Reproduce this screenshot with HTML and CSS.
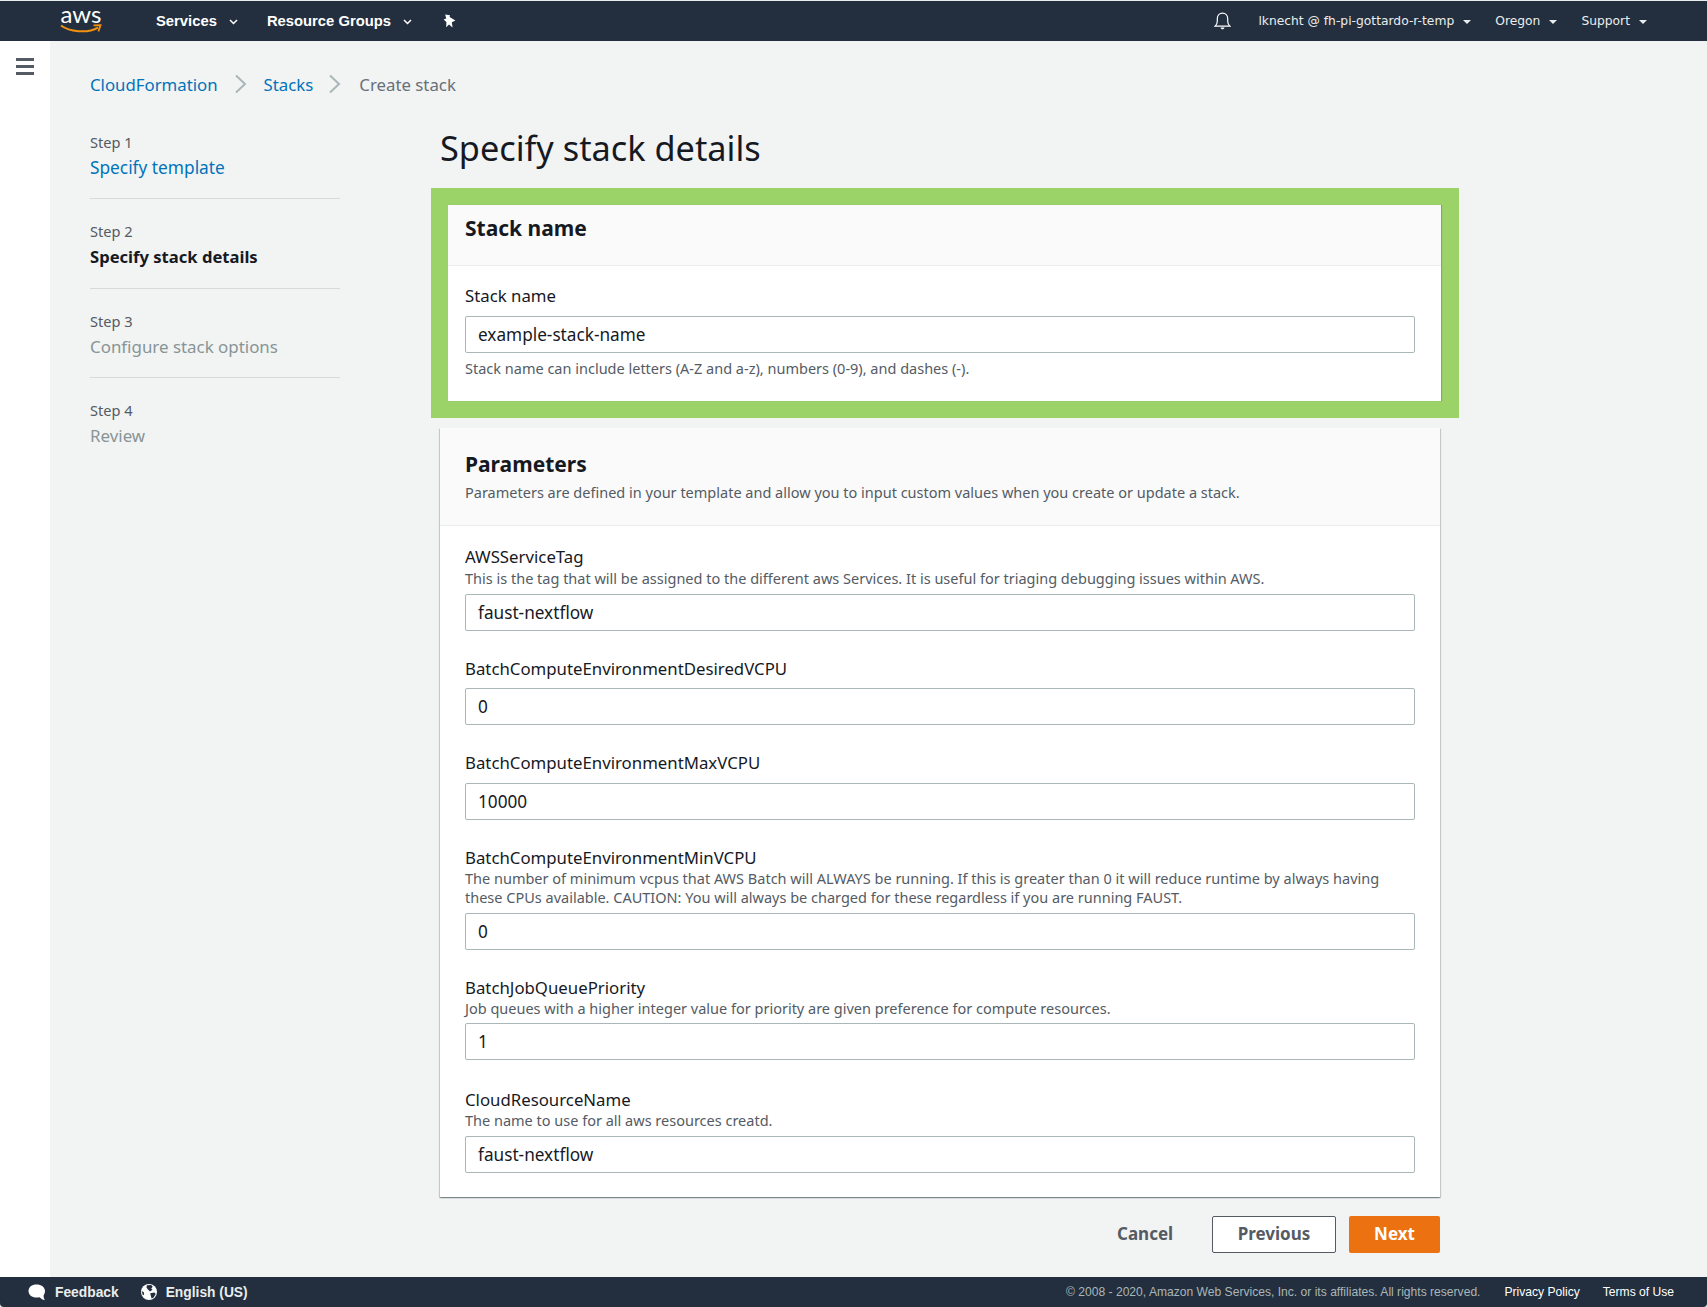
FILE: index.html
```html
<!DOCTYPE html>
<html lang="en">
<head>
<meta charset="utf-8">
<title>Specify stack details</title>
<link rel="stylesheet" href="styles.css">
</head>
<body>
<div class="app">
  <header class="topbar">
    <div class="logo">
      <span class="logo-text">aws</span>
      <svg class="logo-smile" width="42" height="10" viewBox="0 0 42 10"><path d="M1 1.5C9 7.5 27 10 38 3.6" fill="none" stroke="#f29111" stroke-width="2"/><path d="M33.5 1.4L40.5 1.2L38.4 7.4" fill="none" stroke="#f29111" stroke-width="1.8"/></svg>
    </div>
    <nav class="nav-left">
      <span class="nav-item">Services<svg class="caret" width="9" height="6" viewBox="0 0 9 6"><path d="M1 1l3.5 3.5L8 1" fill="none" stroke="#fff" stroke-width="1.5"/></svg></span>
      <span class="nav-item">Resource Groups<svg class="caret" width="9" height="6" viewBox="0 0 9 6"><path d="M1 1l3.5 3.5L8 1" fill="none" stroke="#fff" stroke-width="1.5"/></svg></span>
      <svg class="pin" width="14" height="14" viewBox="0 0 14 14"><path d="M3.2 0.6L8 1.2L7.6 3L13.4 6.6L9.8 8.2L10.6 13.4L7 10.4L4.2 13.2L4.4 8L1.6 5.4L4.2 4.6Z" fill="#fff"/></svg>
    </nav>
    <nav class="nav-right">
      <svg class="bell" width="17" height="18" viewBox="0 0 17 18"><path d="M1 14.2c1.6-1.2 2.3-2.6 2.3-5V6.6C3.300 3.400 5.500 1.200 8.500 1.200s5.200 2.200 5.200 5.400v2.600c0 2.400 .700 3.800 2.300 5z" fill="none" stroke="#fff" stroke-width="1.200"/><path d="M6.500 15.500h4c-.300 1.200-1 1.800-2 1.800s-1.700-.600-2-1.800z" fill="#fff"/></svg>
      <span class="nav-user">lknecht @ fh-pi-gottardo-r-temp<span class="tri"></span></span>
      <span class="nav-user">Oregon<span class="tri"></span></span>
      <span class="nav-user">Support<span class="tri"></span></span>
    </nav>
  </header>
  <div class="body">
    <aside class="sidebar">
      <div class="burger"><span></span><span></span><span></span></div>
    </aside>
    <main class="main">
      <div class="breadcrumb">
        <a class="link">CloudFormation</a>
        <svg class="chev chev-first" width="13" height="20" viewBox="0 0 13 20"><path d="M2 1.500L11 10L2 18.500" fill="none" stroke="#aab7b8" stroke-width="2"/></svg>
        <a class="link">Stacks</a>
        <svg class="chev chev-second" width="13" height="20" viewBox="0 0 13 20"><path d="M2 1.500L11 10L2 18.500" fill="none" stroke="#aab7b8" stroke-width="2"/></svg>
        <span class="crumb-current">Create stack</span>
      </div>
      <div class="content">
        <ol class="steps">
          <li class="step"><small>Step 1</small><a class="link">Specify template</a></li>
          <li class="step"><small>Step 2</small><b>Specify stack details</b></li>
          <li class="step"><small>Step 3</small><span class="off">Configure stack options</span></li>
          <li class="step"><small>Step 4</small><span class="off">Review</span></li>
        </ol>
        <div class="form">
          <h1 class="title">Specify stack details</h1>
          <div class="highlight">
            <section class="panel panel-inner">
              <div class="panel-head head-plain"><h2>Stack name</h2></div>
              <div class="panel-body body-stack">
                <label class="lbl lbl-stack">Stack name</label>
                <input class="inp" value="example-stack-name">
                <p class="hint">Stack name can include letters (A-Z and a-z), numbers (0-9), and dashes (-).</p>
              </div>
            </section>
          </div>
          <section class="panel">
            <div class="panel-head head-params">
              <h2>Parameters</h2>
              <p class="desc">Parameters are defined in your template and allow you to input custom values when you create or update a stack.</p>
            </div>
            <div class="panel-body body-params">
              <div class="field field-first">
                <label class="lbl">AWSServiceTag</label>
                <p class="desc desc-f">This is the tag that will be assigned to the different aws Services. It is useful for triaging debugging issues within AWS.</p>
                <input class="inp" value="faust-nextflow">
              </div>
              <div class="field">
                <label class="lbl lbl-solo">BatchComputeEnvironmentDesiredVCPU</label>
                <input class="inp" value="0">
              </div>
              <div class="field">
                <label class="lbl lbl-solo">BatchComputeEnvironmentMaxVCPU</label>
                <input class="inp" value="10000">
              </div>
              <div class="field">
                <label class="lbl">BatchComputeEnvironmentMinVCPU</label>
                <p class="desc desc-f">The number of minimum vcpus that AWS Batch will ALWAYS be running. If this is greater than 0 it will reduce runtime by always having these CPUs available. CAUTION: You will always be charged for these regardless if you are running FAUST.</p>
                <input class="inp" value="0">
              </div>
              <div class="field">
                <label class="lbl">BatchJobQueuePriority</label>
                <p class="desc desc-f">Job queues with a higher integer value for priority are given preference for compute resources.</p>
                <input class="inp" value="1">
              </div>
              <div class="field">
                <label class="lbl">CloudResourceName</label>
                <p class="desc desc-f">The name to use for all aws resources creatd.</p>
                <input class="inp" value="faust-nextflow">
              </div>
            </div>
          </section>
          <div class="actions">
            <button class="btn btn-text">Cancel</button>
            <button class="btn btn-outline">Previous</button>
            <button class="btn btn-primary">Next</button>
          </div>
        </div>
      </div>
    </main>
  </div>
  <footer class="footer">
    <div class="foot-left">
      <span class="foot-item"><svg width="18" height="17" viewBox="0 0 18 17"><path d="M8.500 0.500C13.200 0.500 17 3.200 17 7C17 9 16.200 10.400 15.600 11.400C15.500 13 16 15 17 16.200C14.800 15.800 13 14.800 11.600 13.200C10.800 13.400 9.600 13.500 8.500 13.500C3.800 13.500 0.500 10.800 0.500 7C0.500 3.200 3.800 0.500 8.500 0.500Z" fill="#fff"/></svg>Feedback</span>
      <span class="foot-item"><svg width="16" height="16" viewBox="0 0 16 16"><circle cx="8" cy="8" r="8" fill="#fff"/><path d="M6 1.200L10.200 0.900L11.700 2.700L10.200 4.600L11.500 5.700L9 7.400L6.700 5.300L5.400 3.200Z M9.200 9.300L13.500 8.600L14.700 10L12.600 13.500L10.600 14.600L9.800 11.800Z M0.700 7L2.800 8.200L3.200 10.300L1.900 11.500Z" fill="#232f3e"/></svg>English (US)</span>
    </div>
    <div class="foot-right">
      <span class="copy">© 2008 - 2020, Amazon Web Services, Inc. or its affiliates. All rights reserved.</span>
      <a class="foot-link">Privacy Policy</a>
      <a class="foot-link">Terms of Use</a>
    </div>
  </footer>
</div>
</body>
</html>
```
FILE: styles.css
```css
* { box-sizing: border-box; }
html, body { margin: 0; padding: 0; }
body { font-family: "Noto Sans", "Open Sans", sans-serif; color: #16191f; background: #fff; }
.app { height: 1307px; width: 1707px; display: flex; flex-direction: column; overflow: hidden; padding-top: 1px; background: #eaeded; }
.topbar { height: 40px; flex: none; background: #232f3e; display: flex; align-items: center; padding-left: 60px; padding-right: 60px; color: #fff; }
.logo { width: 42px; height: 26px; margin-top: -8px; position: relative; }
.logo-text { display: block; font-family: "Lato", sans-serif; font-size: 24px; line-height: 20px; color: #fff; letter-spacing: 0; text-align: center; font-weight: 400; }
.logo-smile { position: absolute; left: 0; top: 20px; }
.nav-left { display: flex; align-items: center; margin-left: 54px; font-family: "Liberation Sans", Arial, sans-serif; font-weight: 700; font-size: 14.800px; }
.nav-item { display: flex; align-items: center; margin-right: 29px; }
.caret { margin-left: 12px; margin-top: 2px; }
.pin { margin-left: 1px; }
.nav-right { margin-left: auto; display: flex; align-items: center; font-family: "DejaVu Sans", sans-serif; font-size: 12.300px; color: #eaeded; }
.bell { margin-right: 27px; }
.nav-user { display: flex; align-items: center; margin-right: 24px; }
.nav-user:last-child { margin-right: 0; }
.tri { width: 0; height: 0; border-left: 4px solid transparent; border-right: 4px solid transparent; border-top: 4px solid #eaeded; margin-left: 9px; margin-top: 2px; }
.body { flex: 1; display: flex; min-height: 0; }
.sidebar { width: 50px; flex: none; background: #fff; padding: 17px 0 0 16px; }
.burger { width: 18px; display: flex; flex-direction: column; gap: 4.500px; }
.burger span { display: block; height: 2.500px; background: #545b64; }
.main { flex: 1; background: #f2f3f3; padding: 32px 0 0 40px; }
.breadcrumb { display: flex; align-items: center; height: 22px; font-size: 16.800px; }
.link { color: #0073bb; }
.chev-first { margin: 0 17px 0 16px; }
.chev-second { margin: 0 18px 0 15px; }
.crumb-current { color: #687078; }
.content { display: flex; }
.steps { list-style: none; margin: 37px 0 0; padding: 0; width: 250px; flex: none; font-size: 17px; }
.step { padding: 22px 0 19.500px; border-bottom: 1px solid #d5dbdb; display: flex; flex-direction: column; }
.step:first-child { padding-top: 0; padding-bottom: 18.500px; }
.step:nth-child(2) { padding-bottom: 20.500px; }
.step:nth-child(3) { padding-bottom: 18.500px; }
.step:last-child { border-bottom: 0; }
.step small { font-size: 14.600px; line-height: 20px; color: #545b64; margin-bottom: 5px; }
.step a, .step b, .step span { line-height: 22px; }
.step a { font-size: 17.300px; }
.step b { font-size: 16.600px; }
.step .off { font-size: 16.900px; }
.off { color: #879596; }
.form { width: 1000px; margin-left: 100px; }
.title { margin: 30px 0 0; font-size: 34.300px; line-height: 46px; font-weight: 400; height: 46px; }
.highlight { margin: 17px -19px 0 -9px; border: 17px solid #9bd369; border-right-width: 18px; background: #fff; }
.panel { background: #fff; box-shadow: 0 1px 1px rgba(0, 28, 36, .3), 1px 1px 1px rgba(0, 28, 36, .15), -1px 1px 1px rgba(0, 28, 36, .15); margin-top: 10px; height: 769px; }
.panel-inner { margin: 0; height: 196px; box-shadow: 1px 0 1px rgba(0, 28, 36, .2); }
.panel-head { background: #fafafa; border-bottom: 1px solid #eaeded; padding: 0 25px; }
.head-plain { height: 61px; padding-left: 17px; padding-top: 10px; }
.head-params { height: 98px; padding-top: 23px; }
.panel h2 { margin: 0; font-size: 21px; line-height: 26px; font-weight: 700; }
.desc, .hint { margin: 0; font-size: 14.500px; color: #545b64; }
.head-params .desc { line-height: 20px; margin-top: 5px; }
.panel-body { padding: 0 25px; }
.body-stack { padding: 19px 26px 0 17px; }
.body-params { padding-top: 20px; }
.lbl { display: block; font-size: 16.800px; line-height: 22px; color: #16191f; }
.lbl-solo { margin-bottom: 8.500px; }
.lbl-stack { margin-bottom: 9px; }
.desc-f { line-height: 19.300px; margin-bottom: 5.200px; }
.inp { display: block; width: 100%; height: 37px; border: 1px solid #aab7b8; border-radius: 2px; background: #fff; padding: 0 12px; font: inherit; font-size: 17.200px; color: #16191f; outline: none; }
.hint { margin-top: 6px; line-height: 19px; }
.field { margin-bottom: 27px; }
.field-first { margin-bottom: 26.500px; }
.field-first .desc-f { margin-top: 1px; margin-bottom: 6px; }
.field:last-child { margin-top: 29px; margin-bottom: 0; }
.actions { display: flex; justify-content: flex-end; align-items: center; margin-top: 19px; }
.btn { height: 37px; font: inherit; font-weight: 700; font-size: 17px; border-radius: 2px; border: 1px solid transparent; padding: 0 0 2px; }
.btn-text { background: transparent; color: #545b64; width: 56px; margin-right: 40px; }
.btn-outline { width: 124px; background: #fff; border-color: #545b64; color: #545b64; margin-right: 13px; }
.btn-primary { width: 91px; background: #ec7211; color: #fff; }
.footer { height: 30px; flex: none; background: #232f3e; display: flex; align-items: center; justify-content: space-between; padding: 0 33px 0 28px; font-family: "Liberation Sans", Arial, sans-serif; font-size: 13.800px; color: #fff; border-radius: 0 0 4px 4px; }
.foot-left { display: flex; align-items: center; }
.foot-item { display: flex; align-items: center; gap: 9px; margin-right: 22px; font-weight: 700; color: #eaeded; }
.foot-right { display: flex; align-items: center; font-size: 12.100px; }
.copy { color: #aab7b8; margin-right: 24px; }
.foot-link { color: #fff; margin-left: 23px; }
.copy + .foot-link { margin-left: 0; }
```
